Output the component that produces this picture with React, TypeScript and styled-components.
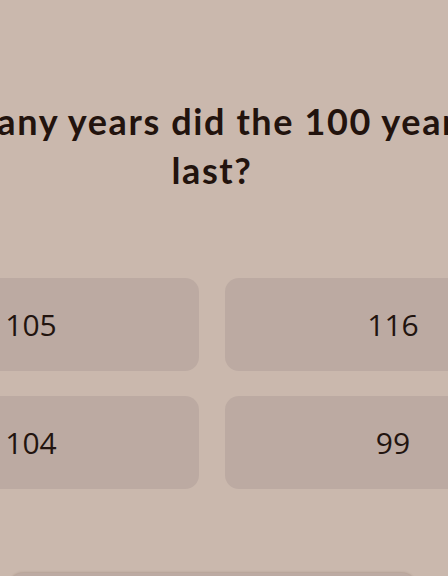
import React from "react";
import styled, { createGlobalStyle } from "styled-components";

const Global = createGlobalStyle`
  html, body { margin: 0; padding: 0; background: #cab8ad; overflow: hidden; }
  body { font-family: "Open Sans", "Liberation Sans", sans-serif; }
`;

const Page = styled.main`
  width: 424px;
  min-height: 576px;
  display: flex;
  flex-direction: column;
  align-items: center;
`;

const Quiz = styled.section`
  width: 698px;
  flex-shrink: 0;
  display: flex;
  flex-direction: column;
  align-items: center;
`;

const Question = styled.h1`
  margin: 97px 0 0;
  width: 100%;
  font-family: "Lato", "Noto Sans", sans-serif;
  font-weight: 700;
  font-size: 36px;
  letter-spacing: 1.6px;
  line-height: 49px;
  color: #22130d;
  text-align: center;
`;

const Answers = styled.div`
  margin-top: 83px;
  width: 100%;
  display: grid;
  grid-template-columns: 1fr 1fr;
  column-gap: 26px;
  row-gap: 25px;
`;

const Answer = styled.button`
  height: 93px;
  border: none;
  border-radius: 14px;
  background: #bcaaa2;
  color: #22140f;
  font-family: "Open Sans", "Liberation Sans", sans-serif;
  font-size: 30px;
  font-weight: 400;
  text-align: center;
  cursor: pointer;
`;

const Submit = styled.button`
  margin-top: 84px;
  width: 407px;
  height: 60px;
  border: none;
  border-radius: 14px;
  background: #bcaaa2;
  box-shadow: 0 -1px 2px rgba(120, 95, 85, 0.25);
  color: #22140f;
  font-family: "Lato", sans-serif;
  font-size: 24px;
  font-weight: 700;
`;

const answers = ["105", "116", "104", "99"];

export default function App() {
  return (
    <>
      <Global />
      <Page>
        <Quiz>
          <Question>How many years did the 100 years war last?</Question>
          <Answers>
            {answers.map((a) => (
              <Answer key={a}>{a}</Answer>
            ))}
          </Answers>
          <Submit>Submit</Submit>
        </Quiz>
      </Page>
    </>
  );
}
